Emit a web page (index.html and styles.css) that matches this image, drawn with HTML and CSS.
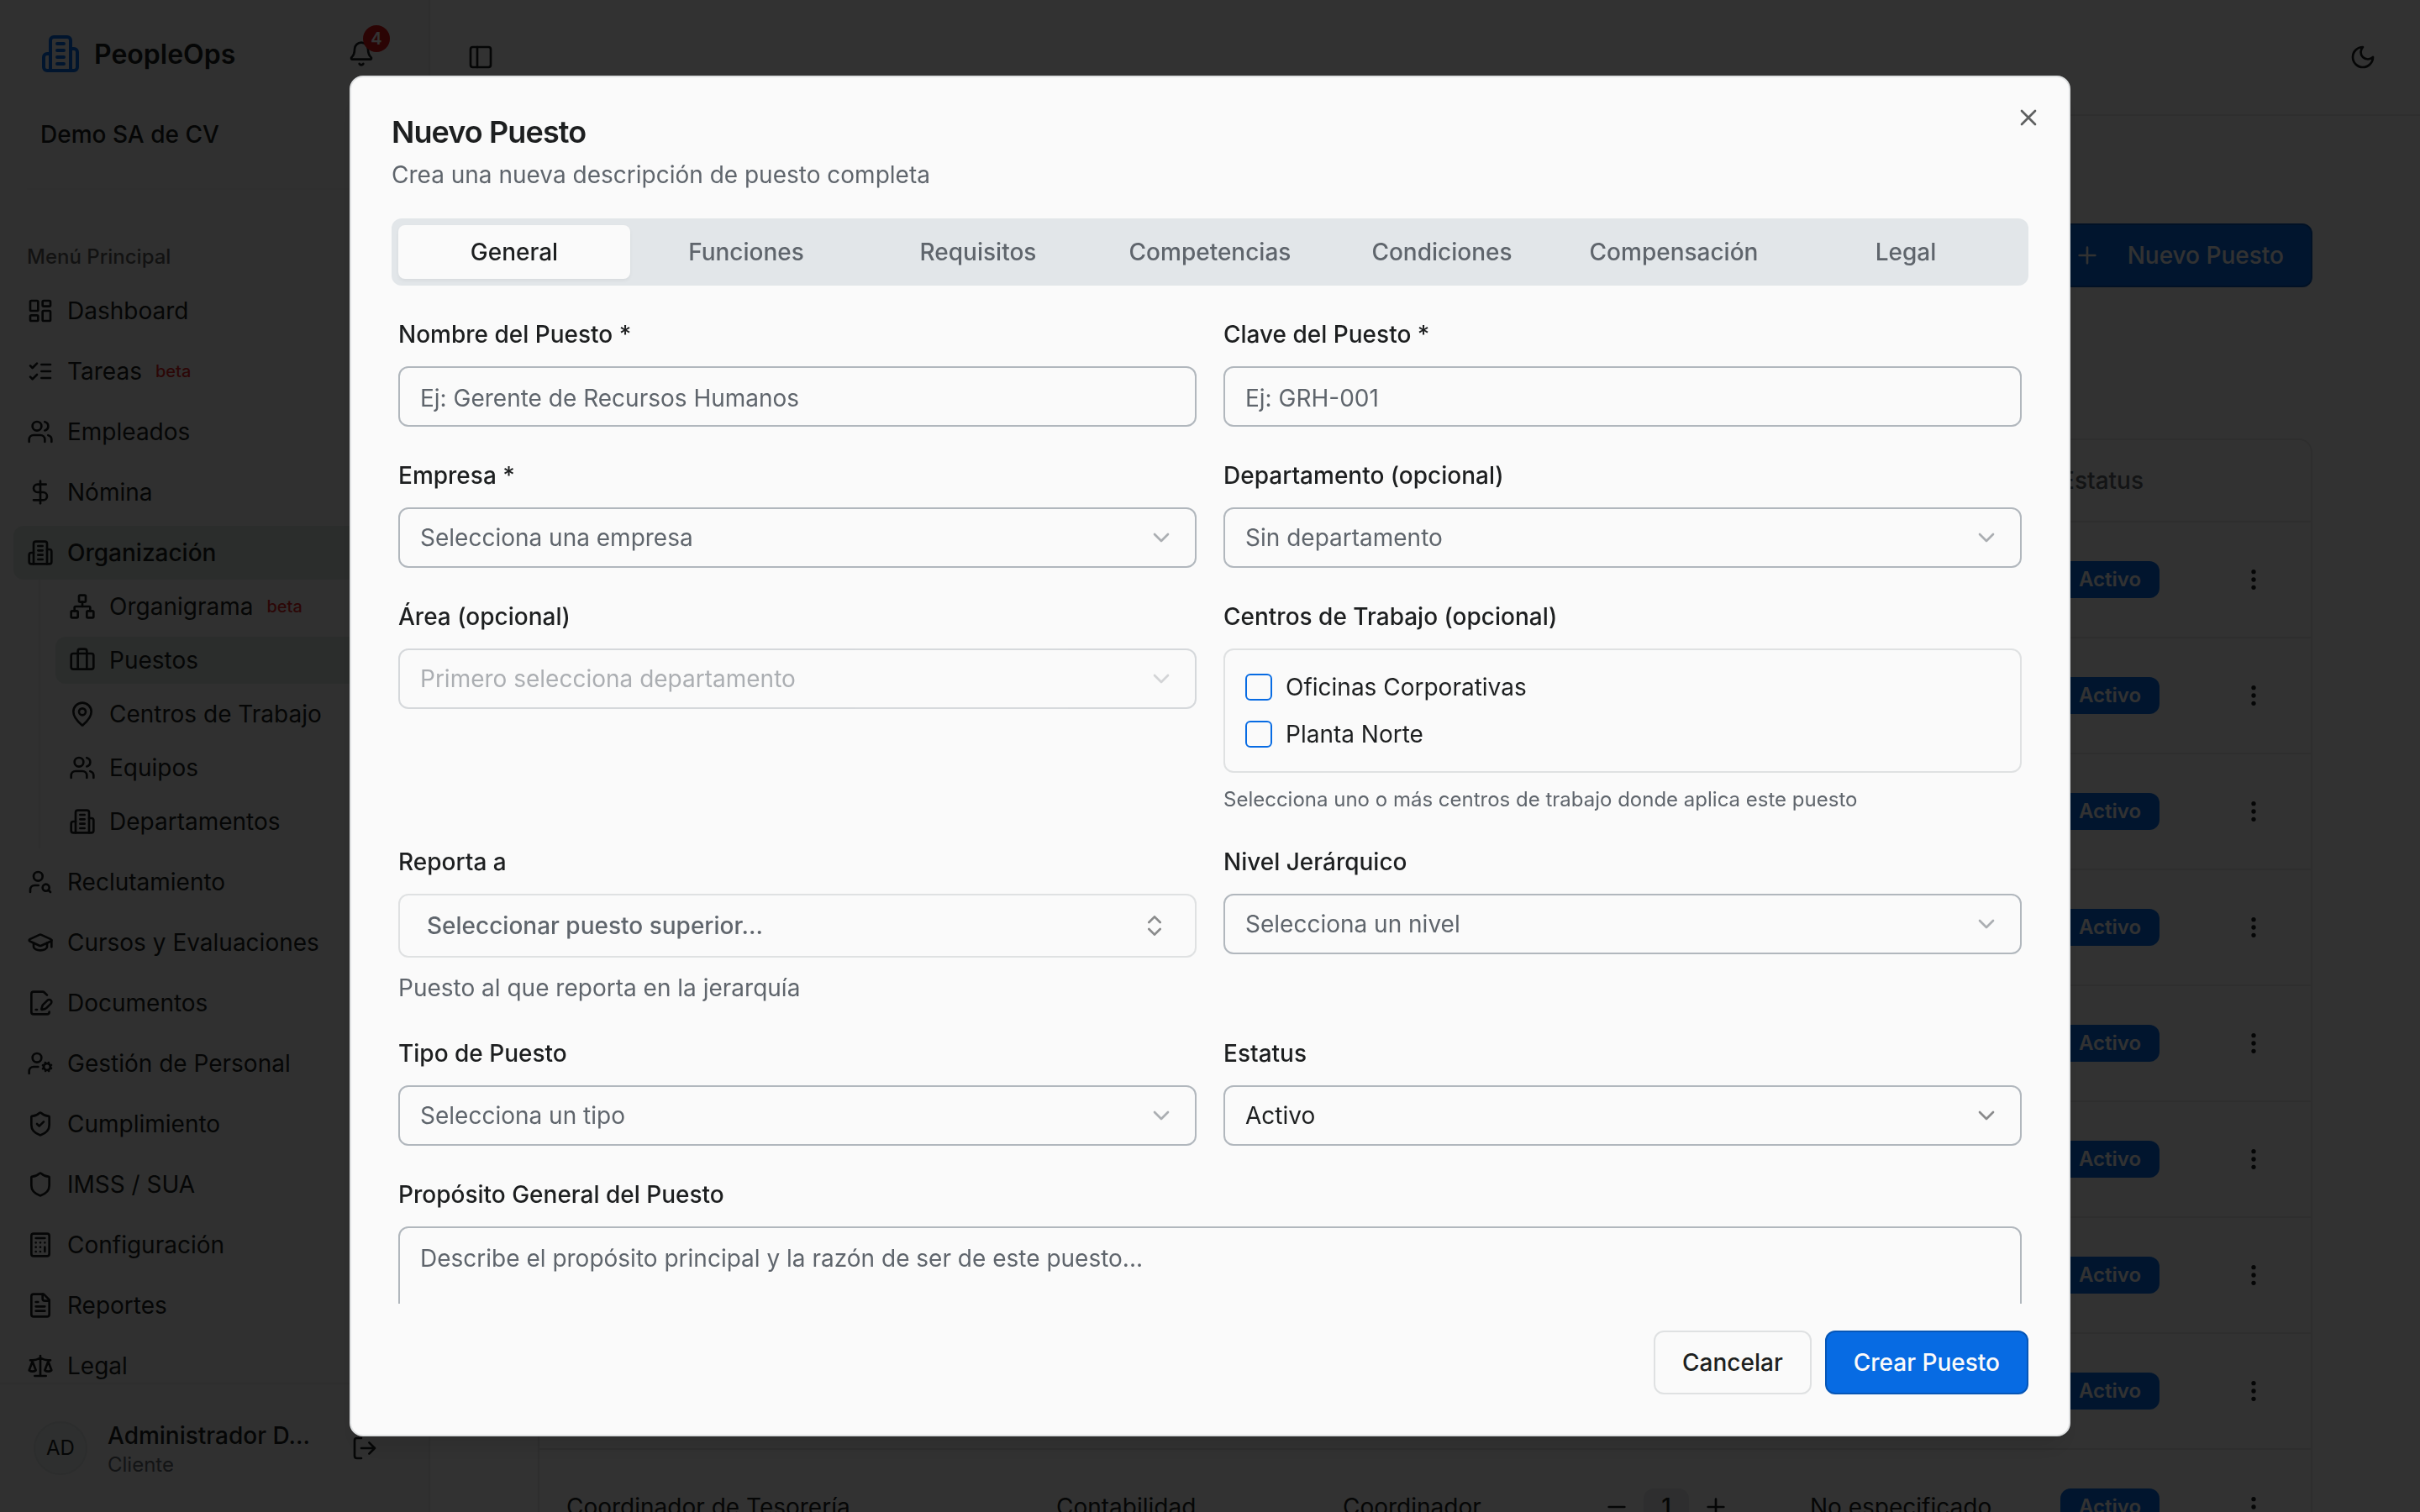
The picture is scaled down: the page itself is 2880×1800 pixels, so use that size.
FILE: index.html
```html
<!DOCTYPE html>
<html lang="es">
<head>
<meta charset="utf-8">
<title>PeopleOps - Puestos</title>
<link rel="stylesheet" href="styles.css">
</head>
<body>
<svg class="sprite" aria-hidden="true">
  <symbol id="building" viewBox="0 0 24 24"><path d="M6 22V4a2 2 0 0 1 2-2h8a2 2 0 0 1 2 2v18Z"/><path d="M6 12H4a2 2 0 0 0-2 2v6a2 2 0 0 0 2 2h2"/><path d="M18 9h2a2 2 0 0 1 2 2v9a2 2 0 0 1-2 2h-2"/><path d="M10 6h4M10 10h4M10 14h4M10 18h4"/></symbol>
  <symbol id="bell" viewBox="0 0 24 24"><path d="M10.268 21a2 2 0 0 0 3.464 0"/><path d="M3.262 15.326A1 1 0 0 0 4 17h16a1 1 0 0 0 .74-1.673C19.41 13.956 18 12.499 18 8A6 6 0 0 0 6 8c0 4.499-1.411 5.956-2.738 7.326"/></symbol>
  <symbol id="panel" viewBox="0 0 24 24"><rect width="18" height="18" x="3" y="3" rx="2"/><path d="M9 3v18"/></symbol>
  <symbol id="moon" viewBox="0 0 24 24"><path d="M12 3a6 6 0 0 0 9 9 9 9 0 1 1-9-9Z"/></symbol>
  <symbol id="dashboard" viewBox="0 0 24 24"><rect width="7" height="9" x="3" y="3" rx="1"/><rect width="7" height="5" x="14" y="3" rx="1"/><rect width="7" height="9" x="14" y="12" rx="1"/><rect width="7" height="5" x="3" y="16" rx="1"/></symbol>
  <symbol id="checks" viewBox="0 0 24 24"><path d="m3 17 2 2 4-4"/><path d="m3 7 2 2 4-4"/><path d="M13 6h8M13 12h8M13 18h8"/></symbol>
  <symbol id="users" viewBox="0 0 24 24"><path d="M16 21v-2a4 4 0 0 0-4-4H6a4 4 0 0 0-4 4v2"/><circle cx="9" cy="7" r="4"/><path d="M22 21v-2a4 4 0 0 0-3-3.87"/><path d="M16 3.13a4 4 0 0 1 0 7.75"/></symbol>
  <symbol id="dollar" viewBox="0 0 24 24"><path d="M12 2v20"/><path d="M17 5H9.5a3.5 3.5 0 0 0 0 7h5a3.5 3.5 0 0 1 0 7H6"/></symbol>
  <symbol id="network" viewBox="0 0 24 24"><rect x="16" y="16" width="6" height="6" rx="1"/><rect x="2" y="16" width="6" height="6" rx="1"/><rect x="9" y="2" width="6" height="6" rx="1"/><path d="M5 16v-3a1 1 0 0 1 1-1h12a1 1 0 0 1 1 1v3"/><path d="M12 12V8"/></symbol>
  <symbol id="luggage" viewBox="0 0 24 24"><path d="M16 20V4a2 2 0 0 0-2-2h-4a2 2 0 0 0-2 2v16"/><rect width="20" height="14" x="2" y="6" rx="2"/></symbol>
  <symbol id="pin" viewBox="0 0 24 24"><path d="M20 10c0 4.993-5.539 10.193-7.399 11.799a1 1 0 0 1-1.202 0C9.539 20.193 4 14.993 4 10a8 8 0 0 1 16 0"/><circle cx="12" cy="10" r="3"/></symbol>
  <symbol id="usersearch" viewBox="0 0 24 24"><circle cx="10" cy="7" r="4"/><path d="M10.3 15H7a4 4 0 0 0-4 4v2"/><circle cx="17" cy="17" r="3"/><path d="m21 21-1.9-1.9"/></symbol>
  <symbol id="cap" viewBox="0 0 24 24"><path d="M21.42 10.922a1 1 0 0 0-.019-1.838L12.83 5.18a2 2 0 0 0-1.66 0L2.6 9.08a1 1 0 0 0 0 1.832l8.57 3.908a2 2 0 0 0 1.66 0z"/><path d="M22 10v6"/><path d="M6 12.5V16a6 3 0 0 0 12 0v-3.5"/></symbol>
  <symbol id="filepen" viewBox="0 0 24 24"><path d="m18 5-2.414-2.414A2 2 0 0 0 14.172 2H6a2 2 0 0 0-2 2v16a2 2 0 0 0 2 2h12a2 2 0 0 0 2-2"/><path d="M21.378 12.626a1 1 0 0 0-3.004-3.004l-4.01 4.012a2 2 0 0 0-.506.854l-.837 2.87a.5.5 0 0 0 .62.62l2.87-.837a2 2 0 0 0 .854-.506z"/><path d="M8 18h1"/></symbol>
  <symbol id="usercog" viewBox="0 0 24 24"><circle cx="18" cy="15" r="3"/><circle cx="9" cy="7" r="4"/><path d="M10 15H6a4 4 0 0 0-4 4v2"/><path d="m21.7 16.4-.9-.3M15.2 13.9l-.9-.3M16.6 18.7l.3-.9M19.1 12.2l.3-.9M19.6 18.7l-.4-1M16.8 12.3l-.4-1M14.3 16.6l1-.4M20.7 13.8l1-.4"/></symbol>
  <symbol id="shield" viewBox="0 0 24 24"><path d="M20 13c0 5-3.5 7.500-7.660 8.950a1 1 0 0 1-.67-.01C7.500 20.500 4 18 4 13V6a1 1 0 0 1 1-1c2 0 4.500-1.200 6.240-2.720a1.170 1.170 0 0 1 1.520 0C14.510 3.810 17 5 19 5a1 1 0 0 1 1 1z"/></symbol>
  <symbol id="check" viewBox="0 0 24 24"><path d="m9 12 2 2 4-4"/></symbol>
  <symbol id="calc" viewBox="0 0 24 24"><rect width="16" height="20" x="4" y="2" rx="2"/><path d="M8 6h8M16 14v4M16 10h.01M12 10h.01M8 10h.01M12 14h.01M8 14h.01M12 18h.01M8 18h.01"/></symbol>
  <symbol id="file" viewBox="0 0 24 24"><path d="M15 2H6a2 2 0 0 0-2 2v16a2 2 0 0 0 2 2h12a2 2 0 0 0 2-2V7Z"/><path d="M14 2v4a2 2 0 0 0 2 2h4M10 9H8M16 13H8M16 17H8"/></symbol>
  <symbol id="scale" viewBox="0 0 24 24"><path d="m16 16 3-8 3 8c-.87.65-1.920 1-3 1s-2.130-.35-3-1ZM2 16l3-8 3 8c-.87.65-1.920 1-3 1s-2.130-.35-3-1ZM7 21h10M12 3v18M3 7h2c2 0 5-1 7-2 2 1 5 2 7 2h2"/></symbol>
  <symbol id="logout" viewBox="0 0 24 24"><path d="M9 21H5a2 2 0 0 1-2-2V5a2 2 0 0 1 2-2h4M16 17l5-5-5-5M21 12H9"/></symbol>
  <symbol id="plus" viewBox="0 0 24 24"><path d="M5 12h14M12 5v14"/></symbol>
  <symbol id="minus" viewBox="0 0 24 24"><path d="M5 12h14"/></symbol>
  <symbol id="dots" viewBox="0 0 24 24"><circle cx="12" cy="12" r="1"/><circle cx="12" cy="5" r="1"/><circle cx="12" cy="19" r="1"/></symbol>
  <symbol id="down" viewBox="0 0 24 24"><path d="m6 9 6 6 6-6"/></symbol>
  <symbol id="updown" viewBox="0 0 24 24"><path d="m7 15 5 5 5-5M7 9l5-5 5 5"/></symbol>
  <symbol id="x" viewBox="0 0 24 24"><path d="M18 6 6 18M6 6l12 12"/></symbol>
</svg>

<div class="app">
  <aside class="sidebar">
    <div class="brand">
      <svg class="icon logo"><use href="#building"/></svg>
      <span class="brand-name">PeopleOps</span>
      <span class="notify"><svg class="icon"><use href="#bell"/></svg><span class="count">4</span></span>
    </div>
    <div class="company">Demo SA de CV</div>
    <div class="rule"></div>
    <div class="group-title">Menú Principal</div>
    <nav class="menu">
      <a class="item"><svg class="icon"><use href="#dashboard"/></svg>Dashboard</a>
      <a class="item"><svg class="icon"><use href="#checks"/></svg>Tareas<span class="beta">beta</span></a>
      <a class="item"><svg class="icon"><use href="#users"/></svg>Empleados</a>
      <a class="item"><svg class="icon"><use href="#dollar"/></svg>Nómina</a>
      <div>
        <a class="item active strong"><svg class="icon"><use href="#building"/></svg>Organización</a>
        <div class="submenu">
          <a class="item"><svg class="icon"><use href="#network"/></svg>Organigrama<span class="beta">beta</span></a>
          <a class="item active"><svg class="icon"><use href="#luggage"/></svg>Puestos</a>
          <a class="item"><svg class="icon"><use href="#pin"/></svg>Centros de Trabajo</a>
          <a class="item"><svg class="icon"><use href="#users"/></svg>Equipos</a>
          <a class="item"><svg class="icon"><use href="#building"/></svg>Departamentos</a>
        </div>
      </div>
      <a class="item"><svg class="icon"><use href="#usersearch"/></svg>Reclutamiento</a>
      <a class="item"><svg class="icon"><use href="#cap"/></svg>Cursos y Evaluaciones</a>
      <a class="item"><svg class="icon"><use href="#filepen"/></svg>Documentos</a>
      <a class="item"><svg class="icon"><use href="#usercog"/></svg>Gestión de Personal</a>
      <a class="item"><svg class="icon"><use href="#shield"/><use href="#check"/></svg>Cumplimiento</a>
      <a class="item"><svg class="icon"><use href="#shield"/></svg>IMSS / SUA</a>
      <a class="item"><svg class="icon"><use href="#calc"/></svg>Configuración</a>
      <a class="item"><svg class="icon"><use href="#file"/></svg>Reportes</a>
      <a class="item"><svg class="icon"><use href="#scale"/></svg>Legal</a>
    </nav>
    <div class="user">
      <span class="avatar">AD</span>
      <div class="user-text"><div class="user-name">Administrador D...</div><div class="user-role">Cliente</div></div>
      <svg class="icon"><use href="#logout"/></svg>
    </div>
  </aside>
  <main class="main">
    <header class="topbar"><svg class="icon"><use href="#panel"/></svg><svg class="icon"><use href="#moon"/></svg></header>
    <div class="actions"><button class="btn primary add"><svg class="icon"><use href="#plus"/></svg>Nuevo Puesto</button></div>
    <section class="table">
      <div class="row head"><span class="col-status">Estatus</span></div>
      <div class="row"><span class="badge col-status">Activo</span><svg class="icon col-menu"><use href="#dots"/></svg></div>
      <div class="row"><span class="badge col-status">Activo</span><svg class="icon col-menu"><use href="#dots"/></svg></div>
      <div class="row"><span class="badge col-status">Activo</span><svg class="icon col-menu"><use href="#dots"/></svg></div>
      <div class="row"><span class="badge col-status">Activo</span><svg class="icon col-menu"><use href="#dots"/></svg></div>
      <div class="row"><span class="badge col-status">Activo</span><svg class="icon col-menu"><use href="#dots"/></svg></div>
      <div class="row"><span class="badge col-status">Activo</span><svg class="icon col-menu"><use href="#dots"/></svg></div>
      <div class="row"><span class="badge col-status">Activo</span><svg class="icon col-menu"><use href="#dots"/></svg></div>
      <div class="row"><span class="badge col-status">Activo</span><svg class="icon col-menu"><use href="#dots"/></svg></div>
      <div class="row">
        <span>Coordinador de Tesorería</span><span>Contabilidad</span><span>Coordinador</span>
        <span class="stepper"><svg class="icon"><use href="#minus"/></svg><span class="qty">1</span><svg class="icon"><use href="#plus"/></svg></span>
        <span>No especificado</span>
        <span class="badge col-status">Activo</span><svg class="icon col-menu"><use href="#dots"/></svg>
      </div>
    </section>
  </main>
</div>

<div class="overlay">
  <div class="dialog">
    <svg class="icon close"><use href="#x"/></svg>
    <h2 class="title">Nuevo Puesto</h2>
    <p class="desc">Crea una nueva descripción de puesto completa</p>
    <div class="tabs">
      <span class="tab on">General</span><span class="tab">Funciones</span><span class="tab">Requisitos</span><span class="tab">Competencias</span><span class="tab">Condiciones</span><span class="tab">Compensación</span><span class="tab">Legal</span>
    </div>
    <div class="scroll">
      <div class="form">
        <div class="field"><div class="label"><label>Nombre del Puesto *</label></div><div class="control input"><span>Ej: Gerente de Recursos Humanos</span></div></div>
        <div class="field"><div class="label"><label>Clave del Puesto *</label></div><div class="control input"><span>Ej: GRH-001</span></div></div>
        <div class="field"><div class="label"><label>Empresa *</label></div><div class="control"><span>Selecciona una empresa</span><svg class="icon"><use href="#down"/></svg></div></div>
        <div class="field"><div class="label"><label>Departamento (opcional)</label></div><div class="control"><span>Sin departamento</span><svg class="icon"><use href="#down"/></svg></div></div>
        <div class="field"><div class="label"><label>Área (opcional)</label></div><div class="control disabled"><span>Primero selecciona departamento</span><svg class="icon"><use href="#down"/></svg></div></div>
        <div class="field">
          <div class="label"><label>Centros de Trabajo (opcional)</label></div>
          <div class="options">
            <div class="option"><span class="box"></span>Oficinas Corporativas</div>
            <div class="option"><span class="box"></span>Planta Norte</div>
          </div>
          <p class="hint small">Selecciona uno o más centros de trabajo donde aplica este puesto</p>
        </div>
        <div class="field">
          <div class="label"><label>Reporta a</label></div>
          <div class="control combo"><span>Seleccionar puesto superior...</span><svg class="icon"><use href="#updown"/></svg></div>
          <p class="hint">Puesto al que reporta en la jerarquía</p>
        </div>
        <div class="field"><div class="label"><label>Nivel Jerárquico</label></div><div class="control"><span>Selecciona un nivel</span><svg class="icon"><use href="#down"/></svg></div></div>
        <div class="field"><div class="label"><label>Tipo de Puesto</label></div><div class="control"><span>Selecciona un tipo</span><svg class="icon"><use href="#down"/></svg></div></div>
        <div class="field"><div class="label"><label>Estatus</label></div><div class="control filled"><span>Activo</span><svg class="icon"><use href="#down"/></svg></div></div>
        <div class="field wide"><div class="label"><label>Propósito General del Puesto</label></div><div class="control area"><span>Describe el propósito principal y la razón de ser de este puesto...</span></div></div>
      </div>
    </div>
    <div class="footer"><button class="btn outline">Cancelar</button><button class="btn primary">Crear Puesto</button></div>
  </div>
</div>
</body>
</html>
```
FILE: styles.css
```css
:root {
  --bg: #fafafa;
  --fg: #1d1f20;
  --muted: #5f656c;
  --border: #dfe1e2;
  --input: #b1b7bd;
  --primary: #076be3;
  --primary-edge: #0656b7;
}
* { box-sizing: border-box; margin: 0; }
body {
  width: 2880px; height: 1800px; overflow: hidden;
  background: var(--bg); color: var(--fg);
  font: 400 28px/40px Inter, "Liberation Sans", sans-serif;
}
.sprite { position: absolute; width: 0; height: 0; }
.icon {
  width: 32px; height: 32px; flex: none; display: block;
  fill: none; stroke: currentColor; stroke-width: 2; stroke-linecap: round; stroke-linejoin: round;
}

/* Shell */
.app { display: flex; height: 1800px; }
.sidebar {
  width: 512px; flex: none; height: 1800px; display: flex; flex-direction: column;
  background: #f0f0f0; border-right: 2px solid #e3e4e4; color: #1d1f20;
}
.brand { display: flex; align-items: center; height: 48px; margin: 40px 64px 0 48px; }
.logo { width: 48px; height: 48px; color: var(--primary); }
.brand-name { margin-left: 16px; padding-top: 2px; font-size: 32px; font-weight: 600; }
.notify { position: relative; margin-left: auto; }
.count {
  position: absolute; left: 18px; top: -18px; width: 32px; height: 32px; border-radius: 50%;
  background: #d61414; color: #fff; text-align: center; font-size: 20px; line-height: 32px; font-weight: 600;
}
.company { margin: 52px 48px 0; font-weight: 500; }
.rule { height: 2px; margin: 44px 30px 0 32px; background: #e8e8e8; }
.group-title { margin: 60px 0 12px 32px; font-size: 24px; font-weight: 500; opacity: .7; }
.menu { flex: 1; min-height: 0; overflow: hidden; display: flex; flex-direction: column; gap: 8px; padding: 0 16px; }
.item { display: flex; align-items: center; gap: 16px; height: 64px; flex: none; padding: 0 16px; border-radius: 12px; white-space: nowrap; }
.strong { font-weight: 500; }
.active { background: #d6dedb; }
.beta { font-size: 20px; font-weight: 500; color: #dc2626; }
.submenu { margin: 0 28px 0 30px; border-left: 2px solid #e4e4e4; padding: 4px 0 4px 18px; display: flex; flex-direction: column; gap: 8px; }
.submenu .item { height: 56px; }
.user { display: flex; align-items: center; height: 154px; flex: none; padding: 0 60px 0 40px; border-top: 2px solid #e3e4e4; }
.avatar { width: 64px; height: 64px; border-radius: 50%; border: 2px solid #dadfdf; background: #e4e9e8; font-size: 24px; line-height: 60px; text-align: center; }
.user-text { flex: 1; margin-left: 24px; padding-top: 3px; line-height: 36px; }
.user-name { font-weight: 500; }
.user-role { font-size: 24px; color: var(--muted); line-height: 34px; }
.main { flex: 1; min-width: 0; }
.topbar { display: flex; justify-content: space-between; align-items: center; height: 138px; padding: 0 52px 0 44px; border-bottom: 2px solid #e3e4e4; }
.actions { display: flex; justify-content: flex-end; padding: 128px 128px 0 0; }
.table { margin: 180px 128px 0; border: 2px solid #e3e4e4; border-radius: 16px; }
.row {
  display: grid; grid-template-columns: 583px 341px 302px 254px 298px 214px 1fr; align-items: center;
  height: 138px; padding-left: 32px; border-bottom: 2px solid #e3e4e4; white-space: nowrap;
}
.head { height: 98px; color: var(--muted); font-weight: 500; }
.col-status { grid-column: 6; justify-self: start; }
.col-menu { grid-column: 7; }
.badge { height: 44px; padding: 0 20px; border: 2px solid transparent; border-radius: 12px; background: var(--primary); background-clip: border-box; color: #fafafa; font-size: 24px; font-weight: 600; line-height: 40px; }
.stepper { display: flex; align-items: center; gap: 16px; padding-left: 8px; }
.qty { width: 54px; height: 44px; border-radius: 12px; background: #e4e7e9; font-weight: 500; text-align: center; line-height: 44px; }

/* Buttons */
.btn {
  display: flex; align-items: center; gap: 32px; height: 76px; padding: 0 32px; border: 2px solid var(--border); border-radius: 12px;
  background: var(--bg); color: var(--fg); font: inherit; font-weight: 500;
}
.primary { background: var(--primary); border-color: var(--primary-edge); color: #fafafa; }

/* Dialog */
.overlay { position: fixed; inset: 0; display: flex; align-items: center; justify-content: center; background: rgba(0, 0, 0, .8); }
.dialog {
  position: relative; display: flex; flex-direction: column; width: 2048px; height: 1620px; padding: 48px;
  background: var(--bg); border: 2px solid var(--border); border-radius: 16px;
  box-shadow: 0 20px 30px -6px rgba(0, 0, 0, .1), 0 8px 12px -8px rgba(0, 0, 0, .1);
}
.close { position: absolute; top: 32px; right: 32px; opacity: .7; }
.title { height: 36px; font-size: 36px; line-height: 34px; font-weight: 600; letter-spacing: -0.025em; }
.desc { margin-top: 12px; color: var(--muted); }
.tabs { display: grid; grid-template-columns: repeat(7, 1fr); height: 80px; flex: none; margin-top: 32px; padding: 8px; border-radius: 12px; background: #e2e6e9; }
.tab { border-radius: 8px; text-align: center; line-height: 64px; font-weight: 500; color: var(--muted); }
.tab.on { background: var(--bg); color: var(--fg); box-shadow: 0 2px 4px rgba(0, 0, 0, .05); }
.scroll { flex: 1; min-height: 0; overflow: hidden; padding: 32px 8px 0; }
.form { display: grid; grid-template-columns: 1fr 1fr; gap: 32px; align-items: start; }
.wide { grid-column: span 2; }
.label { height: 48px; margin-bottom: 16px; font-size: 32px; line-height: 50px; }
.label label { font-size: 28px; font-weight: 500; }
.control {
  display: flex; align-items: center; justify-content: space-between; height: 72px; padding: 0 24px;
  border: 2px solid var(--input); border-radius: 12px; color: var(--muted);
}
.control .icon { opacity: .5; }
.input { padding-top: 4px; }
.disabled { opacity: .5; }
.filled { color: var(--fg); }
.combo { height: 76px; padding: 0 32px; border-color: var(--border); font-weight: 500; }
.combo .icon { color: var(--fg); }
.area { height: 200px; align-items: flex-start; padding-top: 16px; }
.options { display: flex; flex-direction: column; gap: 16px; padding: 24px; height: 148px; border: 2px solid var(--border); border-radius: 12px; }
.option { display: flex; align-items: center; gap: 16px; height: 40px; }
.box { width: 32px; height: 32px; border: 2px solid var(--primary); border-radius: 6px; }
.hint { margin-top: 16px; color: var(--muted); }
.small { font-size: 24px; line-height: 32px; }
.footer { display: flex; justify-content: flex-end; gap: 16px; margin-top: 32px; }
```
